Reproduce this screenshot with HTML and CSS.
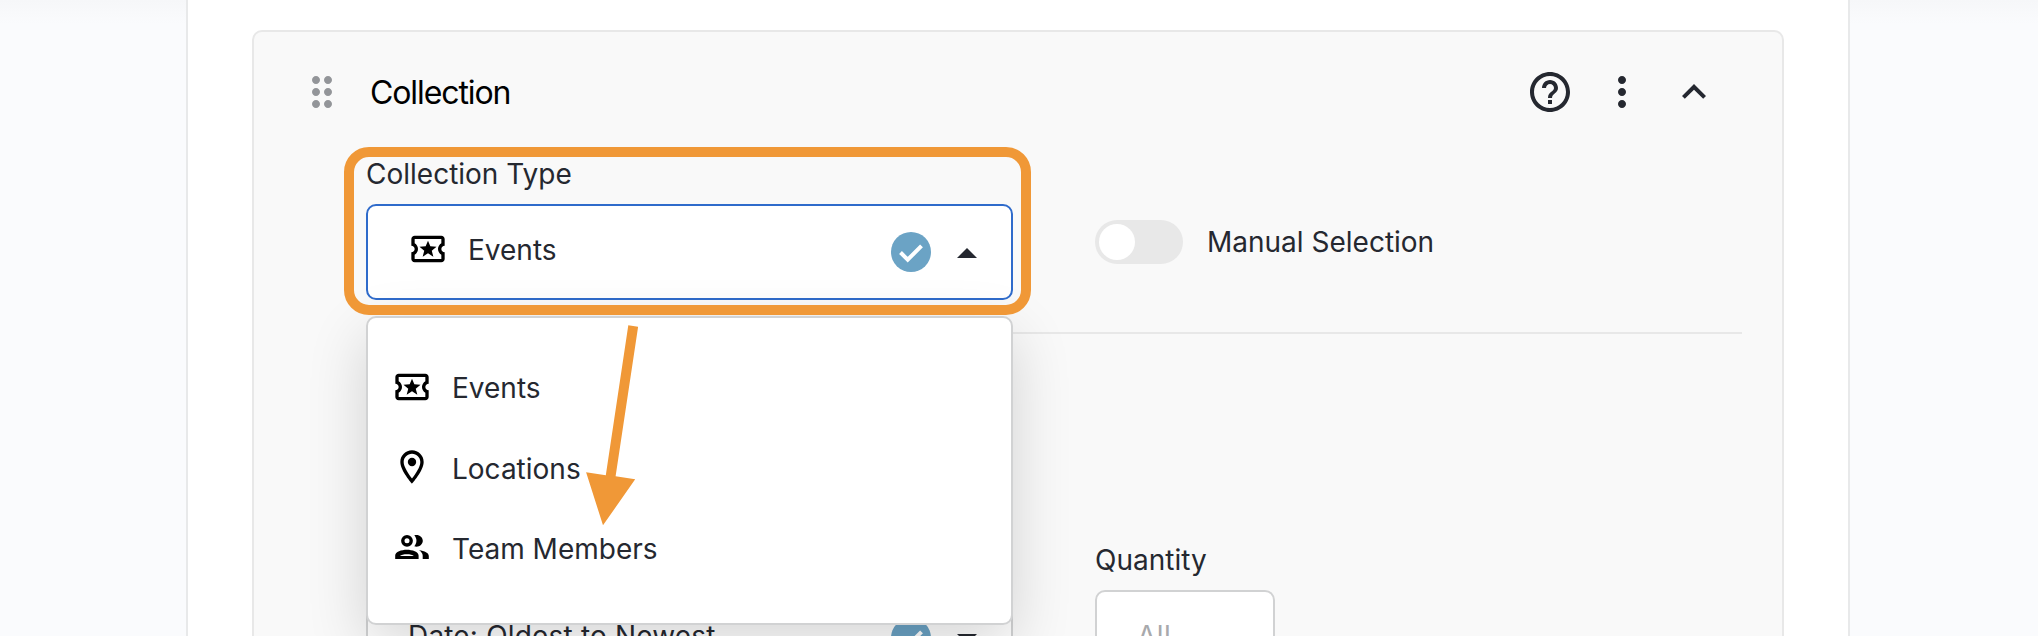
FILE: index.html
```
<!DOCTYPE html>
<html lang="en">

<head>
    <meta charset="utf-8">
    <meta name="viewport" content="width=device-width, initial-scale=1">
    <title>Collection</title>
    <link rel="stylesheet" href="styles.css">
</head>

<body>
    <!-- icons used more than once -->
    <svg class="sprite">
        <symbol id="ticket" viewBox="0 0 24 24">
            <path d="M22 10V6c0-1.1-.9-2-2-2H4c-1.1 0-1.99.9-1.99 2v4c1.1 0 1.99.9 1.99 2s-.89 2-2 2v4c0 1.1.9 2 2 2h16c1.1 0 2-.9 2-2v-4c-1.1 0-2-.9-2-2s.9-2 2-2zm-2-1.46c-1.19.69-2 1.99-2 3.46s.81 2.77 2 3.46V18H4v-2.54c1.19-.69 2-1.99 2-3.46 0-1.48-.8-2.77-1.99-3.46L4 6h16v2.54z"/>
            <path d="M12 7l1.4 3.400 3.700.25-2.850 2.350.95 3.600L12 14.600l-3.200 2 .95-3.600L6.900 10.650l3.700-.25z"/>
        </symbol>
        <symbol id="check" viewBox="0 0 40 40">
            <circle cx="20" cy="20" r="20" fill="#6ba3c5"/>
            <path d="M9.5 20.5l7.2 7.2L30.5 13.9" fill="none" stroke="#fff" stroke-width="4"/>
        </symbol>
    </svg>

    <main class="page">
        <section class="card">
            <header class="card-header">
                <svg class="icon drag" viewBox="0 0 24 24"><path d="M11 18c0 1.1-.9 2-2 2s-2-.9-2-2 .9-2 2-2 2 .9 2 2zm-2-8c-1.1 0-2 .9-2 2s.9 2 2 2 2-.9 2-2-.9-2-2-2zm0-6c-1.1 0-2 .9-2 2s.9 2 2 2 2-.9 2-2-.9-2-2-2zm6 4c1.1 0 2-.9 2-2s-.9-2-2-2-2 .9-2 2 .9 2 2 2zm0 2c-1.1 0-2 .9-2 2s.9 2 2 2 2-.9 2-2-.9-2-2-2zm0 6c-1.1 0-2 .9-2 2s.9 2 2 2 2-.9 2-2-.9-2-2-2z"/></svg>
                <h2 class="card-title">Collection</h2>
                <div class="actions">
                    <svg class="icon" viewBox="0 0 24 24"><path d="M11 18h2v-2h-2v2zm1-16C6.48 2 2 6.48 2 12s4.48 10 10 10 10-4.48 10-10S17.52 2 12 2zm0 18c-4.41 0-8-3.59-8-8s3.59-8 8-8 8 3.59 8 8-3.59 8-8 8zm0-14c-2.21 0-4 1.79-4 4h2c0-1.1.9-2 2-2s2 .9 2 2c0 2-3 1.75-3 5h2c0-2.25 3-2.5 3-5 0-2.21-1.79-4-4-4z"/></svg>
                    <svg class="icon" viewBox="0 0 24 24"><path d="M12 8c1.1 0 2-.9 2-2s-.9-2-2-2-2 .9-2 2 .9 2 2 2zm0 2c-1.1 0-2 .9-2 2s.9 2 2 2 2-.9 2-2-.9-2-2-2zm0 6c-1.1 0-2 .9-2 2s.9 2 2 2 2-.9 2-2-.9-2-2-2z"/></svg>
                    <svg class="icon" viewBox="0 0 24 24"><path d="M12 8l-6 6 1.41 1.41L12 10.83l4.59 4.58L18 14z"/></svg>
                </div>
            </header>

            <div class="row row-type">
                <div class="field type-field">
                    <label class="label">Collection Type</label>
                    <div class="select open">
                        <svg class="item-icon"><use href="#ticket"/></svg>
                        <span class="value">Events</span>
                        <svg class="check"><use href="#check"/></svg>
                        <svg class="caret" viewBox="0 0 20 10"><path d="M0 10L10 0l10 10z"/></svg>
                    </div>
                    <ul class="menu">
                        <li class="option">
                            <svg class="item-icon"><use href="#ticket"/></svg>
                            <span>Events</span>
                        </li>
                        <li class="option">
                            <svg class="item-icon" viewBox="0 0 24 24"><path d="M12 2C8.13 2 5 5.13 5 9c0 5.25 7 13 7 13s7-7.75 7-13c0-3.87-3.13-7-7-7zM7 9c0-2.76 2.24-5 5-5s5 2.24 5 5c0 2.88-2.88 7.19-5 9.88C9.92 16.21 7 11.85 7 9z"/><circle cx="12" cy="9" r="2.5"/></svg>
                            <span>Locations</span>
                        </li>
                        <li class="option">
                            <svg class="item-icon" viewBox="0 0 40 40">
                                <circle cx="15" cy="13.8" r="4.2" fill="none" stroke="#000" stroke-width="3.4"/>
                                <path d="M22.3 8.3c4.2-1.4 8.5 1.4 8.5 5.5s-4.3 6.900-8.5 5.500c2.900-3.300 2.900-7.700 0-11z"/>
                                <path fill-rule="evenodd" d="M3.2 32v-3.500c0-3.600 6.300-5.700 11.700-5.700s11.700 2.100 11.700 5.700V32zM8 28.900h13.800c-1-1.100-3.900-1.700-6.900-1.700s-5.900.6-6.900 1.700z"/>
                                <path d="M27 23.200c5.600.5 9.800 2.600 9.800 5.800v3h-6.100v-3.400c0-2.200-1.500-4-3.700-5.400z"/>
                            </svg>
                            <span>Team Members</span>
                        </li>
                    </ul>
                    <!-- callout around the field and arrow to the option -->
                    <div class="highlight"></div>
                    <svg class="arrow" viewBox="0 0 52 204"><path d="M42.3 3.3l9.800 1.500-22.500 149.500 19.600 3L17 203.300 .1 150.300l19.700 2.900z"/></svg>
                </div>
                <div class="toggle-field">
                    <span class="toggle"><span class="knob"></span></span>
                    <span class="toggle-label">Manual Selection</span>
                </div>
            </div>

            <div class="row row-sort">
                <div class="field">
                    <label class="label">Sort</label>
                    <div class="select">
                        <span class="value date">Date: Oldest to Newest</span>
                        <svg class="check"><use href="#check"/></svg>
                        <svg class="caret" viewBox="0 0 20 10"><path d="M0 0l10 10L20 0z"/></svg>
                    </div>
                </div>
                <div class="field">
                    <label class="label">Quantity</label>
                    <div class="select number">All</div>
                </div>
            </div>
        </section>
    </main>
</body>

</html>
```
FILE: styles.css
```
* {
    box-sizing: border-box;
}

body {
    margin: 0;
    height: 636px;
    overflow: hidden;
    background: linear-gradient(#f6f7f9, #fafbfd 24px);
    font-family: Inter, "Liberation Sans", sans-serif;
    font-size: 28px;
    line-height: 34px;
    letter-spacing: 0;
    color: #252830;
}

.sprite {
    display: none;
}

.page {
    width: 1664px;
    height: 636px;
    margin-left: 186px;
    padding: 30px 64px 0;
    overflow: hidden;
    border-left: 2px solid #e8e9ea;
    border-right: 2px solid #e8e9ea;
    background: #fff;
}

.card {
    width: 1532px;
    height: 760px;
    border: 2px solid #e8e8e8;
    border-radius: 10px;
    background: #f9f9f9;
}

.card-header {
    display: flex;
    align-items: center;
    height: 120px;
    padding: 0 64px 0 44px;
}

.icon {
    display: block;
    width: 48px;
    height: 48px;
    fill: #252830;
}

.drag {
    fill: #939599;
}

.card-title {
    margin: 1px 0 0 24px;
    font-size: 32px;
    font-weight: 400;
    letter-spacing: -1.1px;
    color: #000;
}

.actions {
    display: flex;
    gap: 24px;
    margin-left: auto;
}

.row {
    display: grid;
    grid-template-columns: 647px 1fr;
    column-gap: 82px;
    margin: 0 40px 0 112px;
}

.row-type {
    height: 182px;
    padding-top: 5px;
    border-bottom: 2px solid #e8e8e8;
}

.row-sort {
    padding-top: 209px;
}

.type-field {
    position: relative;
    z-index: 1;
}

.label {
    display: block;
    height: 47px;
}

.select {
    display: flex;
    align-items: center;
    height: 96px;
    padding: 0 34px 0 40px;
    border: 2px solid #d1d2d3;
    border-radius: 10px;
    background: #fff;
}

.open {
    border-color: #2f6bcb;
}

.value {
    margin-bottom: 5px;
}

.date {
    letter-spacing: 0.18px;
}

.item-icon {
    width: 40px;
    height: 40px;
    margin-bottom: 3px;
    fill: #000;
}

.open .item-icon {
    margin-bottom: 6px;
}

.open .value {
    margin-left: 20px;
}

.check {
    width: 40px;
    height: 40px;
    margin-left: auto;
}

.caret {
    width: 20px;
    height: 10px;
    margin: 2px 0 0 26px;
    fill: #252830;
}

.menu {
    position: absolute;
    top: 159px;
    left: 0;
    width: 647px;
    height: 309px;
    margin: 0;
    padding: 30px 24px;
    list-style: none;
    border: 2px solid #d1d2d3;
    border-radius: 10px;
    background: #fff;
    box-shadow: 0 20px 60px rgba(0, 0, 0, 0.16);
}

.option {
    display: flex;
    align-items: center;
    gap: 20px;
    height: 80.4px;
}

.highlight {
    position: absolute;
    top: -10px;
    left: -22px;
    width: 687px;
    height: 168px;
    border: 10px solid #f09837;
    border-radius: 25px;
}

.arrow {
    position: absolute;
    top: 165px;
    left: 220px;
    width: 52px;
    height: 204px;
    fill: #f09837;
}

.toggle-field {
    display: flex;
    align-items: center;
    gap: 24px;
    height: 44px;
    margin-top: 63px;
}

.toggle {
    width: 88px;
    height: 44px;
    padding: 4px;
    border-radius: 22px;
    background: #e8e8e8;
}

.knob {
    display: block;
    width: 36px;
    height: 36px;
    border-radius: 50%;
    background: #fff;
}

.number {
    width: 180px;
    padding-bottom: 4px;
    letter-spacing: 0.4px;
    color: #a8a9ac;
}
```
